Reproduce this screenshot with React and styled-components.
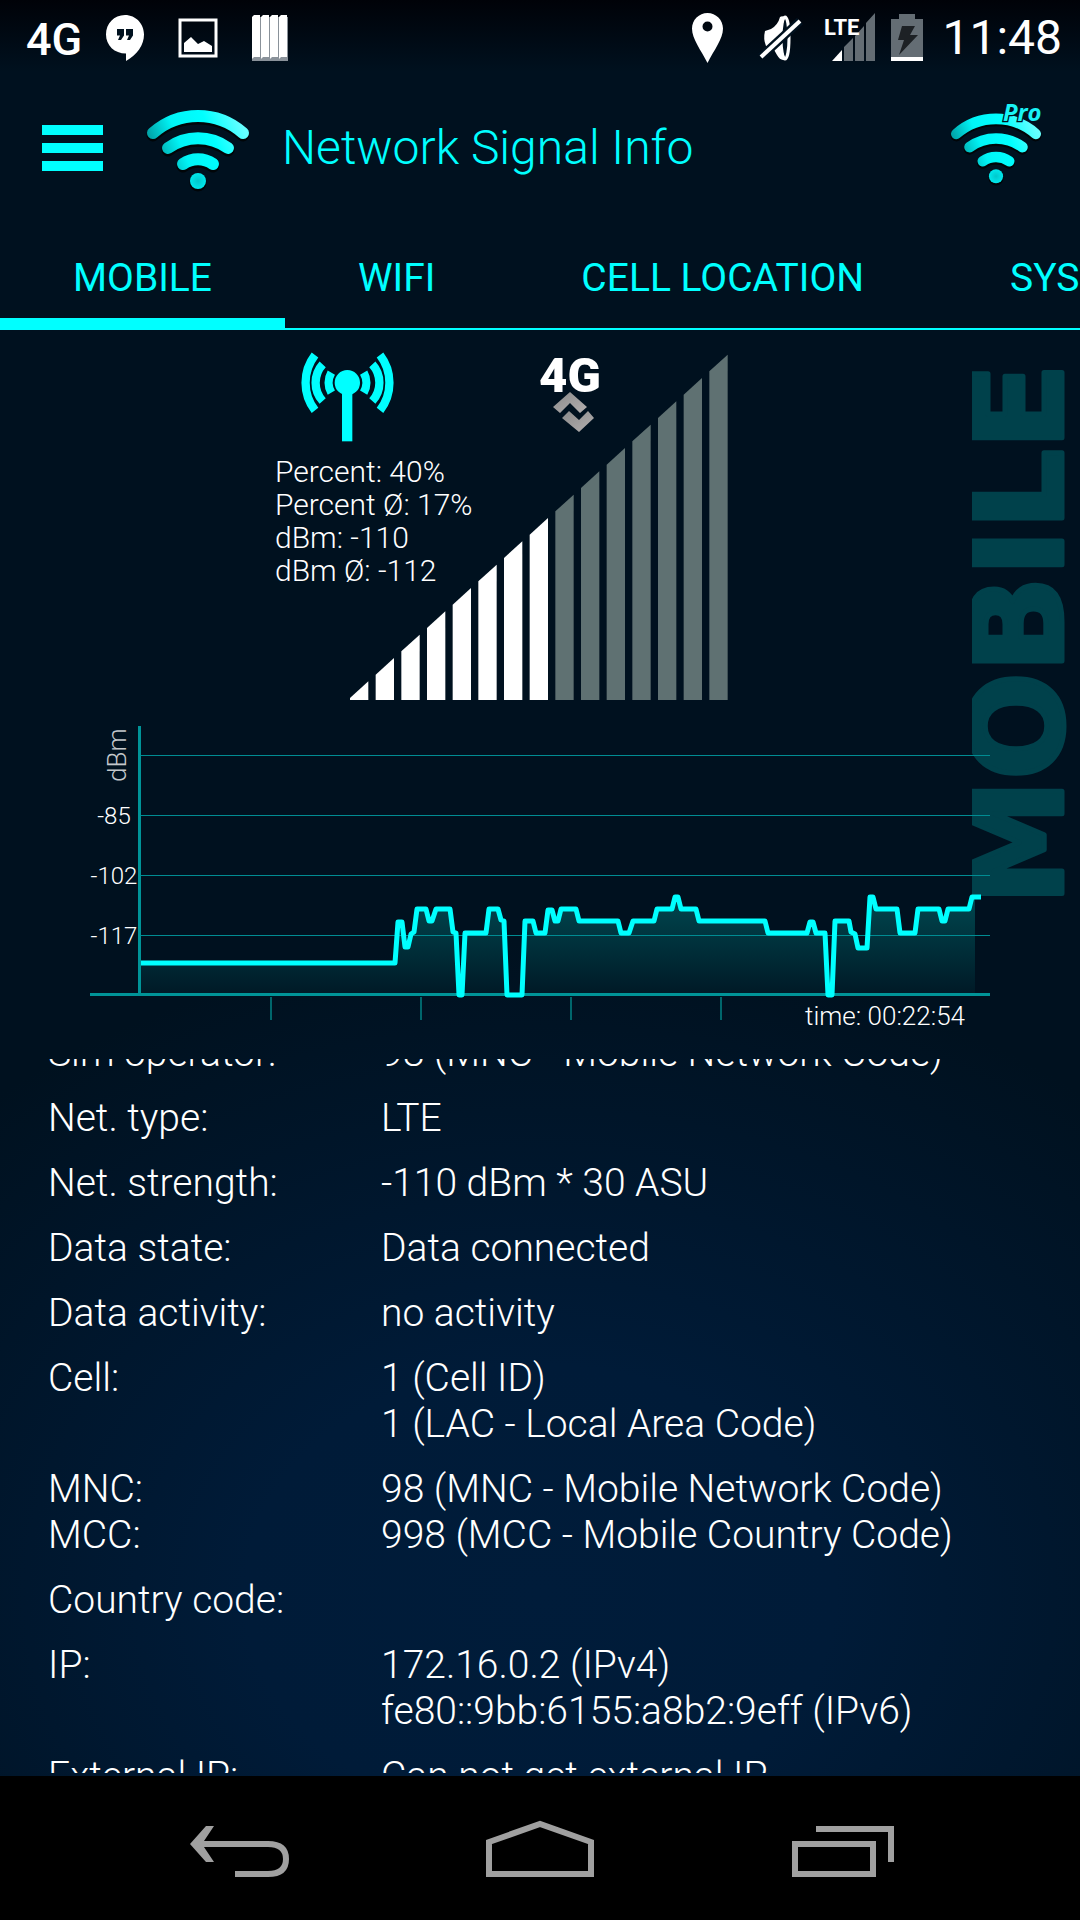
import React, { useEffect, useRef } from 'react';
import styled, { createGlobalStyle } from 'styled-components';

const CYAN = '#00ffff';
const NAVY = '#00111f';

const GlobalStyle = createGlobalStyle`
  * {
    box-sizing: border-box;
  }
  body {
    margin: 0;
    background: #000;
    font-family: Roboto, 'Noto Sans', sans-serif;
  }
`;

const Screen = styled.div`
  display: flex;
  flex-direction: column;
  height: 100vh;
  overflow: hidden;
  background:
    linear-gradient(#000208, rgba(0, 2, 8, 0) 72px),
    radial-gradient(ellipse 78% 34% at 50% 83%, #001c3a 0%, #001b38 35%, rgba(0, 17, 31, 0) 100%),
    ${NAVY};
`;

const StatusBar = styled.header`
  display: flex;
  flex: none;
  align-items: center;
  height: 75px;
  padding: 0 18px 0 26px;
`;

const StatusIcon = styled.svg`
  flex: none;
  margin-left: ${props => props.$gap || 0}px;
  overflow: visible;
`;

const Spacer = styled.div`
  flex: 1;
`;

const Clock = styled.time`
  margin-left: 19px;
  color: #fff;
  font-size: 48px;
  line-height: 56px;
`;

const TitleBar = styled.div`
  display: flex;
  flex: none;
  align-items: center;
  height: 146px;
  padding: 0 39px 0 42px;
`;

const IconButton = styled.button`
  display: flex;
  padding: 0;
  border: 0;
  background: none;
  cursor: pointer;
`;

const AppIcon = styled.div`
  display: flex;
  margin: 0 33px 0 44px;
`;

const WifiDrawing = styled.svg`
  overflow: visible;
`;

const Title = styled.h1`
  flex: 1;
  margin: 0;
  color: ${CYAN};
  font-size: 48px;
  font-weight: 300;
  line-height: 56px;
`;

const Tabs = styled.nav`
  display: flex;
  flex: none;
  height: 109px;
  overflow: hidden;
  box-shadow: inset 0 -2px ${CYAN};
`;

const Tab = styled.button`
  flex: none;
  padding: 16px 73px 0;
  border: 0;
  border-bottom: 12px solid ${props => (props.$active ? CYAN : 'transparent')};
  background: none;
  color: ${CYAN};
  font-family: inherit;
  font-size: 39px;
  cursor: pointer;
`;

const SignalPanel = styled.section`
  position: relative;
  flex: none;
  padding: 20px 90px 29px;
`;

const Watermark = styled.svg`
  position: absolute;
  top: 18px;
  right: 8px;
`;

const SignalArea = styled.div`
  display: grid;
  grid-template-columns: 263px 190px;
  grid-template-rows: 92px auto;
  row-gap: 13px;
  margin: 0 0 20px 185px;
`;

const Antenna = styled.svg`
  grid-area: 1 / 1;
  margin-left: 23px;
`;

const DataType = styled.svg`
  grid-area: 1 / 2;
`;

const Bars = styled.svg`
  grid-area: 1 / 1 / 3 / 3;
  justify-self: end;
  margin-top: 4px;
`;

const Stats = styled.div`
  grid-area: 2 / 1;
  color: #fff;
  font-size: 30px;
  font-weight: 300;
  line-height: 33px;
`;

const Chart = styled.svg`
  position: relative;
  display: block;
  width: 100%;
  font-weight: 300;
`;

const Scroller = styled.main`
  flex: 1;
  min-height: 0;
  margin-bottom: 3px;
  overflow-y: auto;
  scrollbar-width: none;
`;

const InfoTable = styled.table`
  width: 100%;
  border-collapse: collapse;
  color: #fff;
  font-size: 39px;
  font-weight: 300;
  line-height: 46px;
`;

const Label = styled.th`
  width: 381px;
  padding: 10px 0 9px 48px;
  font-weight: 300;
  text-align: left;
  vertical-align: top;
`;

const Value = styled.td`
  padding: 10px 0 9px;
  vertical-align: top;
`;

const NavBar = styled.footer`
  display: flex;
  flex: none;
  height: 144px;
  padding: 0 90px;
  background: #000;
`;

const NavButton = styled(IconButton)`
  flex: 1;
  align-items: center;
  justify-content: center;
`;

const rows = [
  [['Sim operator:'], ['98 (MNC - Mobile Network Code)']],
  [['Net. type:'], ['LTE']],
  [['Net. strength:'], ['-110 dBm * 30 ASU']],
  [['Data state:'], ['Data connected']],
  [['Data activity:'], ['no activity']],
  [['Cell:'], ['1 (Cell ID)', '1 (LAC - Local Area Code)']],
  [['MNC:', 'MCC:'], ['98 (MNC - Mobile Network Code)', '998 (MCC - Mobile Country Code)']],
  [['Country code:'], []],
  [['IP:'], ['172.16.0.2 (IPv4)', 'fe80::9bb:6155:a8b2:9eff (IPv6)']],
  [['External IP:'], ['Can not get external IP']],
];

const history = [
  [51, 243], [305, 243], [308, 202], [312, 202], [315, 227], [318, 227], [321, 214], [324, 212],
  [327, 189], [336, 189], [339, 201], [342, 201], [346, 189], [360, 189], [363, 212], [366, 213],
  [369, 275], [372, 275], [375, 213], [396, 213], [399, 189], [408, 189], [411, 200], [414, 201],
  [417, 275], [432, 275], [435, 201], [443, 201], [446, 213], [455, 213], [458, 190], [462, 190],
  [465, 201], [468, 201], [471, 189], [486, 189], [489, 201], [528, 201], [531, 213], [539, 213],
  [543, 201], [564, 201], [567, 189], [582, 189], [585, 177], [588, 177], [591, 189], [606, 189],
  [609, 201], [675, 201], [678, 213], [717, 213], [720, 202], [723, 202], [726, 213], [735, 213],
  [738, 275], [742, 275], [745, 201], [759, 201], [761, 212], [765, 214], [768, 228], [777, 228],
  [780, 177], [783, 177], [786, 189], [807, 189], [810, 213], [825, 213], [828, 189], [849, 189],
  [852, 201], [855, 201], [858, 189], [879, 189], [882, 177], [891, 177],
];

function WifiIcon({ pro }) {
  const id = pro ? 'wifi-pro' : 'wifi';
  return (
    <WifiDrawing
      width={pro ? 90 : 102}
      height={pro ? 90 : 88}
      viewBox={pro ? '0 -12 102 102' : '0 -6 102 88'}
      aria-hidden="true"
    >
      <defs>
        <linearGradient id={id} gradientUnits="userSpaceOnUse" x1="8" y1="44" x2="92" y2="8">
          <stop offset="0" stopColor="#009fa3" />
          <stop offset="0.3" stopColor="#00f4f6" />
          <stop offset="0.65" stopColor="#00ffff" />
          <stop offset="1" stopColor="#66ffff" />
        </linearGradient>
        <radialGradient id={id + '-dot'}>
          <stop offset="0" stopColor="#00c8cc" />
          <stop offset="1" stopColor="#00e8ec" />
        </radialGradient>
      </defs>
      <g fill="none" stroke="#000508" strokeWidth="13" strokeLinecap="round" transform="translate(0 2)">
        <path d="M6 23A68 68 0 0 1 96 23" />
        <path d="M21 38A51 51 0 0 1 81 38" />
        <path d="M36 54A26 26 0 0 1 66 54" />
        <circle cx="51" cy="71" r="2" />
      </g>
      <g fill="none" stroke={`url(#${id})`} strokeWidth="12" strokeLinecap="round">
        <path d="M6 23A68 68 0 0 1 96 23" />
        <path d="M21 38A51 51 0 0 1 81 38" />
        <path d="M36 54A26 26 0 0 1 66 54" />
      </g>
      <circle cx="51" cy="71" r="8" fill={`url(#${id}-dot)`} />
      {pro && (
        <text
          x="59"
          y="8"
          fill="#19f3f5"
          stroke={NAVY}
          strokeWidth="3"
          paintOrder="stroke"
          fontFamily="'Open Sans', sans-serif"
          fontSize="27"
          fontStyle="italic"
          fontWeight="700"
        >
          Pro
        </text>
      )}
    </WifiDrawing>
  );
}

function StatusIcons() {
  return (
    <>
      <StatusIcon width="54" height="46" viewBox="0 0 54 46">
        <text x="0" y="40" fill="#fff" fontSize="45" fontWeight="500">4G</text>
      </StatusIcon>
      <StatusIcon $gap={26} width="38" height="46" viewBox="0 0 38 46">
        <path
          fill="#fff"
          d="M19 0C8 0 0 8.500 0 19.500S8.500 38.500 20 38.500V46C31 40 38 30 38 19.500S30 0 19 0Z"
        />
        <path fill={NAVY} d="M11 14h7v6.500L15 25h-3l2-4.500h-3ZM20 14h7v6.500L24 25h-3l2-4.500h-3Z" />
      </StatusIcon>
      <StatusIcon $gap={35} width="38" height="38" viewBox="0 0 38 38">
        <rect x="1" y="1" width="36" height="36" fill="none" stroke="#fff" strokeWidth="3" />
        <path fill="#fff" d="M5 24L12 18L19 25L25 22L33 27V33H5Z" />
      </StatusIcon>
      <StatusIcon $gap={35} width="36" height="46" viewBox="0 0 36 46">
        {[0, 9, 18, 27].map(x => (
          <g key={x}>
            <path fill="#8a929a" d={`M${x} 46V44L${x + 7} 2H${x + 9}V46Z`} />
            <path fill="#fff" d={`M${x} 44V2L${x + 2} 0H${x + 8}V42H${x + 2}Z`} />
          </g>
        ))}
      </StatusIcon>
      <Spacer />
      <StatusIcon width="31" height="50" viewBox="0 0 31 50">
        <path
          fill="#fff"
          fillRule="evenodd"
          d="M15.500 0C7 0 0 7 0 15.500C0 26 9 37 15.500 50C22 37 31 26 31 15.500C31 7 24 0 15.500 0ZM15.500 8.500A5 5 0 1 1 15.500 18.500A5 5 0 1 1 15.500 8.500Z"
        />
      </StatusIcon>
      <StatusIcon $gap={38} width="40" height="50" viewBox="0 0 40 50">
        <ellipse cx="24" cy="25" rx="4" ry="21" fill={NAVY} stroke="#fff" strokeWidth="3" />
        <path fill="#fff" d="M4 18L10 16Q17 12 19 4Q22 2 24 5Q20 14 20 25Q20 38 25 46Q20 49 16 42L12 35L5 33Q2 26 4 18Z" />
        <path stroke={NAVY} strokeWidth="9" d="M0 44L39 8" />
        <path stroke="#fff" strokeWidth="4" d="M0 44L39 8" />
      </StatusIcon>
      <StatusIcon $gap={23} width="52" height="50" viewBox="0 0 52 50">
        <path fill="#646d74" d="M20 48V34L29 25V48ZM31 48V23L40 13V48ZM42 48V10L51 0V48Z" />
        <path fill="#fff" d="M8 48L18 37V48Z" />
        <text x="0" y="22" fill="#fff" fontFamily="'Liberation Sans Narrow', Roboto, sans-serif" fontSize="22" fontWeight="700">LTE</text>
      </StatusIcon>
      <StatusIcon $gap={15} width="32" height="50" viewBox="0 0 32 50">
        <path fill="#646d74" d="M8 1H24V6H32V44H0V6H8Z" />
        <path fill="#fff" d="M0 44H32V48H0Z" />
        <path fill="#1d2125" d="M11 13H24L19 22H27L8 42L13 27H7Z" />
      </StatusIcon>
      <Clock>11:48</Clock>
    </>
  );
}

function SignalBars() {
  const bars = [];
  for (let i = 0; i < 15; i++) {
    // every bar is drawn on a grid of a third of a pixel
    const x = i * 77;
    const top = 978 - i * 70;
    bars.push(
      <path
        key={i}
        fill={i < 8 ? '#fff' : '#5f7172'}
        d={`M${x} 1034V${Math.min(top + 50, 1032)}L${x + 55} ${top}V1034Z`}
      />
    );
  }
  return (
    <Bars width="378" height="346" viewBox="0 -4 1134 1038" role="img" aria-label="Signal strength">
      {bars}
    </Bars>
  );
}

function HistoryChart() {
  const line = history.map(p => p.join(' ')).join('L');
  return (
    <Chart viewBox="0 0 900 310" role="img" aria-label="Signal history">
      <defs>
        <linearGradient id="fill" gradientUnits="userSpaceOnUse" x1="0" y1="177" x2="0" y2="275">
          <stop offset="0" stopColor="#00474f" />
          <stop offset="1" stopColor="#001926" />
        </linearGradient>
      </defs>
      <path fill="url(#fill)" d={`M51 275L${line.replace('L891 177', 'L885 177')}V275Z`} />
      {[35, 95, 155, 215].map(y => (
        <rect key={y} x="51" y={y} width="849" height="1" fill="#008c92" />
      ))}
      {[181, 331, 481, 631].map(x => (
        <rect key={x} x={x - 1} y="277" width="2" height="23" fill="#00666c" />
      ))}
      <rect x="0" y="273" width="900" height="3" fill="#009498" />
      <rect x="48" y="6" width="3" height="270" fill="#009498" />
      <path fill="none" stroke={CYAN} strokeWidth="5" strokeLinejoin="round" d={`M${line}`} />
      <g fill="#fff" fontSize="24" textAnchor="middle">
        <text x="24" y="104">-85</text>
        <text x="24" y="164">-102</text>
        <text x="24" y="224">-117</text>
      </g>
      <text fill="#c4c8cc" fontSize="26" transform="translate(36 62) rotate(-90)">dBm</text>
      <text x="875" y="305" fill="#fff" fontSize="26" textAnchor="end">time: 00:22:54</text>
    </Chart>
  );
}

function App() {
  const scroller = useRef(null);

  useEffect(() => {
    scroller.current.scrollTop = 39;
  }, []);

  return (
    <Screen>
      <GlobalStyle />
      <StatusBar>
        <StatusIcons />
      </StatusBar>
      <TitleBar>
        <IconButton aria-label="Menu">
          <svg width="61" height="46" viewBox="0 0 61 46" fill={CYAN}>
            <rect y="0" width="61" height="10" />
            <rect y="18" width="61" height="10" />
            <rect y="36" width="61" height="10" />
          </svg>
        </IconButton>
        <AppIcon>
          <WifiIcon />
        </AppIcon>
        <Title>Network Signal Info</Title>
        <IconButton aria-label="Get the Pro version">
          <WifiIcon pro />
        </IconButton>
      </TitleBar>
      <Tabs>
        <Tab $active>MOBILE</Tab>
        <Tab>WIFI</Tab>
        <Tab>CELL LOCATION</Tab>
        <Tab>SYSTEM</Tab>
      </Tabs>

      <SignalPanel>
        <Watermark width="100" height="572" viewBox="0 0 100 572">
          <text
            fill="#00414b"
            stroke="#00414b"
            strokeWidth="5"
            strokeLinejoin="round"
            fontFamily="'DejaVu Sans', sans-serif"
            fontSize="126"
            fontWeight="700"
            textAnchor="middle"
            transform="translate(90 286) rotate(-90)"
          >
            MOBILE
          </text>
        </Watermark>
        <SignalArea>
          <SignalBars />
          <Antenna width="98" height="92" viewBox="0 0 294 276" role="img" aria-label="Antenna">
            <circle cx="148" cy="98" r="38" fill={CYAN} />
            <rect x="132" y="98" width="31" height="176" fill={CYAN} />
            <g fill="none" stroke={CYAN} strokeWidth="25">
              <path d="M51 15A136 136 0 0 0 51 181M246 15A136 136 0 0 1 246 181" />
              <path d="M74 43A82 82 0 0 0 74 153M223 43A82 82 0 0 1 223 153" />
              <path d="M100 68A60 60 0 0 0 100 128M197 68A60 60 0 0 1 197 128" />
            </g>
          </Antenna>
          <DataType width="66" height="84" viewBox="0 0 66 84">
            <defs>
              <linearGradient id="arrows" x1="0" y1="0" x2="1" y2="1">
                <stop offset="0" stopColor="#8a8a8a" />
                <stop offset="1" stopColor="#b4b0b0" />
              </linearGradient>
            </defs>
            <text x="1" y="42" fill="#fff" fontSize="49" fontWeight="900">4G</text>
            <path fill="url(#arrows)" d="M15 57L32 42L49 57L42 63L32 53L22 63Z" />
            <path fill="url(#arrows)" d="M24 68L31 61L41 70L50 61L56 68L41 82Z" />
          </DataType>
          <Stats>
            <div>Percent: 40%</div>
            <div>Percent Ø: 17%</div>
            <div>dBm: -110</div>
            <div>dBm Ø: -112</div>
          </Stats>
        </SignalArea>
        <HistoryChart />
      </SignalPanel>

      <Scroller ref={scroller}>
        <InfoTable>
          <tbody>
            {rows.map(([labels, values]) => (
              <tr key={labels[0]}>
                <Label scope="row">
                  {labels.map(text => <div key={text}>{text}</div>)}
                </Label>
                <Value>
                  {values.map(text => <div key={text}>{text}</div>)}
                </Value>
              </tr>
            ))}
          </tbody>
        </InfoTable>
      </Scroller>

      <NavBar>
        <NavButton aria-label="Back">
          <svg width="108" height="57" viewBox="0 0 108 57">
            <path fill="#a0a0a0" d="M20 6H28L16 24L28 42H20L4 24Z" />
            <path fill="none" stroke="#a0a0a0" strokeWidth="6" d="M10 24H82C94 24 100 29 100 39S94 54 82 54H49" />
          </svg>
        </NavButton>
        <NavButton aria-label="Home">
          <svg width="108" height="57" viewBox="0 0 108 57">
            <path fill="none" stroke="#a0a0a0" strokeWidth="6" d="M3 54V22L54 4L105 22V54Z" />
          </svg>
        </NavButton>
        <NavButton aria-label="Recent apps">
          <svg width="108" height="57" viewBox="0 0 108 57">
            <path fill="none" stroke="#a0a0a0" strokeWidth="6" d="M9 24H87V54H9ZM30 9H105V42" />
          </svg>
        </NavButton>
      </NavBar>
    </Screen>
  );
}

export default App;
